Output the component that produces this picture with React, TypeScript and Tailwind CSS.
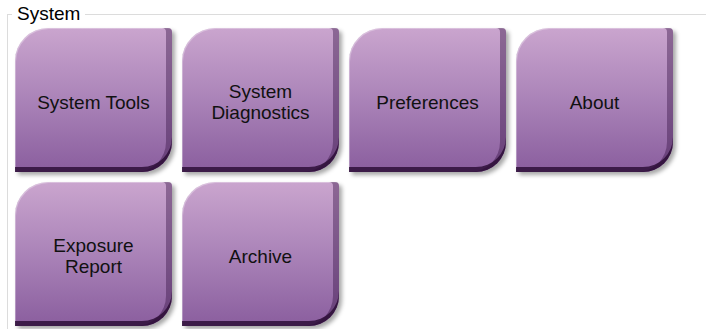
import React from "react";

const items: { label: string[] }[] = [
  { label: ["System Tools"] },
  { label: ["System", "Diagnostics"] },
  { label: ["Preferences"] },
  { label: ["About"] },
  { label: ["Exposure", "Report"] },
  { label: ["Archive"] },
];

function Tile({ label }: { label: string[] }) {
  return (
    <button
      type="button"
      className="flex h-[144px] w-[157px] flex-col items-center justify-center rounded-tl-[33px] rounded-tr-[4px] rounded-br-[30px] rounded-bl-none bg-gradient-to-b from-[#caa5ce] via-[#aa83b8] to-[#8a5e9e] pt-[4px] text-[19px] leading-[21px] text-[#111] shadow-[inset_0_-5px_0_rgba(40,10,50,0.8),inset_-6px_0_0_rgba(55,20,70,0.42),inset_1px_1px_0_rgba(255,255,255,0.3),3px_3px_4px_rgba(0,0,0,0.35)]"
      style={{ fontFamily: '"Liberation Sans", Arial, sans-serif' }}
    >
      {label.map((l) => (
        <span key={l}>{l}</span>
      ))}
    </button>
  );
}

export default function App() {
  return (
    <div
      className="h-[329px] w-[706px] overflow-hidden bg-white"
      style={{ fontFamily: '"Liberation Sans", Arial, sans-serif' }}
    >
      <fieldset className="ml-[7px] mr-[-20px] h-[360px] border border-[#dcdcdc] pl-[7px]">
        <legend className="ml-[-3px] pl-[5px] pr-[5px] text-[19px] leading-[28px] text-black">
          System
        </legend>
        <div className="grid grid-cols-[repeat(4,157px)] gap-x-[10px] gap-y-[10px]">
          {items.map((it) => (
            <Tile key={it.label.join(" ")} label={it.label} />
          ))}
        </div>
      </fieldset>
    </div>
  );
}
